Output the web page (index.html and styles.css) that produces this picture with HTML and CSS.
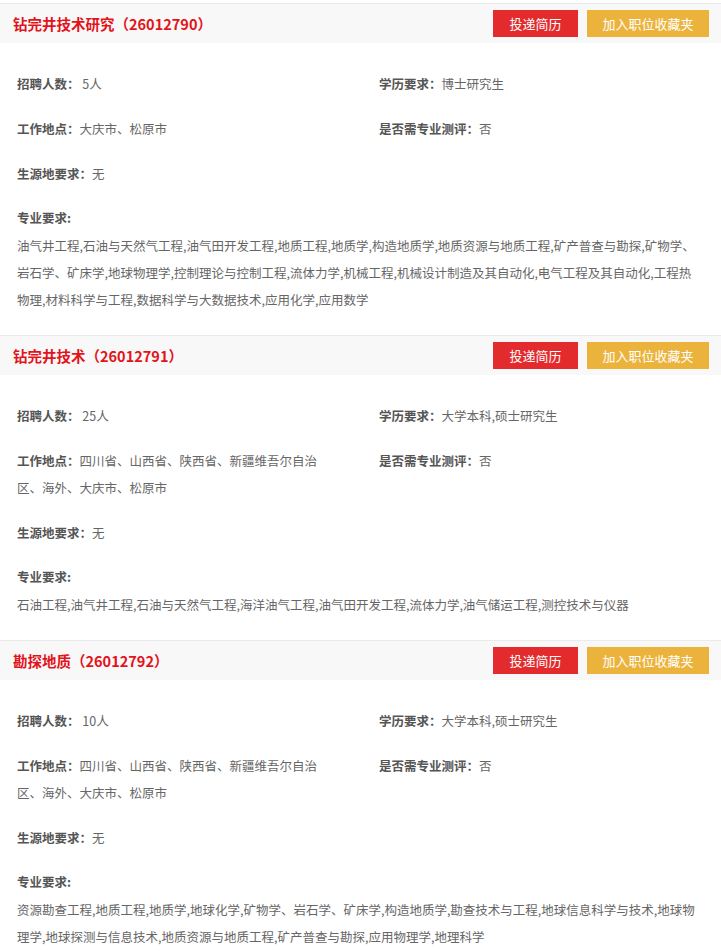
FILE: index.html
```html
<!DOCTYPE html>
<html lang="zh-CN">
<head>
<meta charset="utf-8">
<title>职位列表</title>
<link rel="stylesheet" href="styles.css">
</head>
<body>
<div class="list">
  <section class="job">
    <div class="job-head">
      <h2 class="job-title">钻完井技术研究（26012790）</h2>
      <div class="actions">
        <a class="btn btn-red" href="#">投递简历</a>
        <a class="btn btn-yellow" href="#">加入职位收藏夹</a>
      </div>
    </div>
    <div class="job-body">
      <div class="info-grid">
        <p class="item"><b>招聘人数：</b> 5人</p>
        <p class="item"><b>学历要求：</b>博士研究生</p>
        <p class="item"><b>工作地点：</b>大庆市、松原市</p>
        <p class="item"><b>是否需专业测评：</b>否</p>
        <p class="item"><b>生源地要求：</b>无</p>
      </div>
      <div class="major">
        <b class="major-label">专业要求:</b>
        <p class="major-text">油气井工程,石油与天然气工程,油气田开发工程,地质工程,地质学,构造地质学,地质资源与地质工程,矿产普查与勘探,矿物学、岩石学、矿床学,地球物理学,控制理论与控制工程,流体力学,机械工程,机械设计制造及其自动化,电气工程及其自动化,工程热物理,材料科学与工程,数据科学与大数据技术,应用化学,应用数学</p>
      </div>
    </div>
  </section>

  <section class="job">
    <div class="job-head">
      <h2 class="job-title">钻完井技术（26012791）</h2>
      <div class="actions">
        <a class="btn btn-red" href="#">投递简历</a>
        <a class="btn btn-yellow" href="#">加入职位收藏夹</a>
      </div>
    </div>
    <div class="job-body">
      <div class="info-grid">
        <p class="item"><b>招聘人数：</b> 25人</p>
        <p class="item"><b>学历要求：</b>大学本科,硕士研究生</p>
        <p class="item"><b>工作地点：</b>四川省、山西省、陕西省、新疆维吾尔自治区、海外、大庆市、松原市</p>
        <p class="item"><b>是否需专业测评：</b>否</p>
        <p class="item"><b>生源地要求：</b>无</p>
      </div>
      <div class="major">
        <b class="major-label">专业要求:</b>
        <p class="major-text">石油工程,油气井工程,石油与天然气工程,海洋油气工程,油气田开发工程,流体力学,油气储运工程,测控技术与仪器</p>
      </div>
    </div>
  </section>

  <section class="job">
    <div class="job-head">
      <h2 class="job-title">勘探地质（26012792）</h2>
      <div class="actions">
        <a class="btn btn-red" href="#">投递简历</a>
        <a class="btn btn-yellow" href="#">加入职位收藏夹</a>
      </div>
    </div>
    <div class="job-body">
      <div class="info-grid">
        <p class="item"><b>招聘人数：</b> 10人</p>
        <p class="item"><b>学历要求：</b>大学本科,硕士研究生</p>
        <p class="item"><b>工作地点：</b>四川省、山西省、陕西省、新疆维吾尔自治区、海外、大庆市、松原市</p>
        <p class="item"><b>是否需专业测评：</b>否</p>
        <p class="item"><b>生源地要求：</b>无</p>
      </div>
      <div class="major">
        <b class="major-label">专业要求:</b>
        <p class="major-text">资源勘查工程,地质工程,地质学,地球化学,矿物学、岩石学、矿床学,构造地质学,勘查技术与工程,地球信息科学与技术,地球物理学,地球探测与信息技术,地质资源与地质工程,矿产普查与勘探,应用物理学,地理科学</p>
      </div>
    </div>
  </section>
</div>
</body>
</html>
```

FILE: styles.css
```css
* {
  box-sizing: border-box;
}

html, body {
  margin: 0;
  padding: 0;
  background: #ffffff;
}

body {
  font-family: "Noto Sans CJK SC", "Noto Sans", sans-serif;
  font-size: 12.5px;
  color: #666666;
}

.list {
  padding-top: 3px;
}

.job {
  border-top: 1px solid #ebebeb;
}

.job-head {
  height: 39px;
  background: #f8f8f8;
  display: flex;
  align-items: center;
  justify-content: space-between;
  padding: 0 12px 0 13px;
}

.job-title {
  margin: 0;
  font-size: 14.5px;
  font-weight: bold;
  color: #e3131b;
  line-height: 20px;
}

.actions {
  display: flex;
  gap: 9px;
}

.btn {
  display: block;
  height: 27px;
  line-height: 27px;
  font-size: 13px;
  color: #ffffff;
  text-decoration: none;
  text-align: center;
}

.btn-red {
  background: #e32b2d;
  width: 85px;
}

.btn-yellow {
  background: #ebb33b;
  width: 122px;
}

.job-body {
  padding: 27px 21px 22px 17px;
}

.info-grid {
  display: grid;
  grid-template-columns: 308px 1fr;
  column-gap: 54px;
  row-gap: 18px;
}

.item {
  margin: 0;
  line-height: 27px;
}

.item b,
.major-label {
  font-weight: bold;
  color: #555555;
}

.major {
  margin-top: 17px;
}

.major-label {
  display: block;
  line-height: 27px;
}

.major-text {
  margin: 1px 0 0;
  line-height: 27px;
}
```
